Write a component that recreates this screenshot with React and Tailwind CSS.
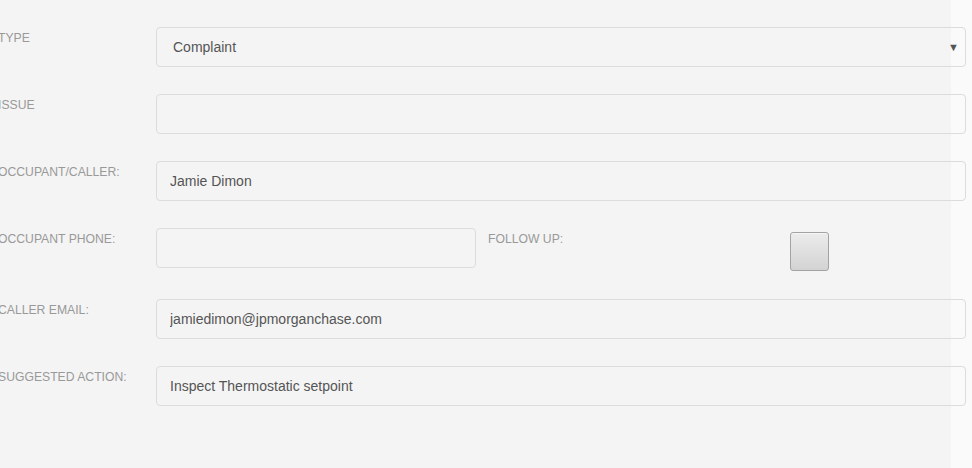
import React from 'react';

const labelCls = 'w-[158px] shrink-0 -ml-[2px] pt-[3px] text-[12.2px] leading-[17px] uppercase text-[#999]';
const inputCls =
  'h-[40px] rounded-[4px] border border-[#dcdcdc] bg-transparent pl-[13px] text-[14px] text-[#555] outline-none';

function Row({ label, children, className = 'h-[40px]' }) {
  return (
    <div className={`flex mb-[27px] ${className}`}>
      <div className={labelCls}>{label}</div>
      {children}
    </div>
  );
}

export default function App() {
  return (
    <div className="min-h-screen w-[972px] bg-[#fafafa] font-['Liberation_Sans',Arial,sans-serif] overflow-hidden">
      <div className="w-[951px] h-[468px] bg-[#f4f4f4] pt-[27px]">
        <Row label="Type">
          <div className={`${inputCls} w-[810px] shrink-0 flex items-center justify-between pl-[16px] pr-[6px]`}>
            <span>Complaint</span>
            <span className="text-[11px] text-[#555]">▼</span>
          </div>
        </Row>

        <Row label="Issue">
          <input className={`${inputCls} w-[810px] shrink-0`} defaultValue="" />
        </Row>

        <Row label="Occupant/Caller:">
          <input className={`${inputCls} w-[810px] shrink-0`} defaultValue="Jamie Dimon" />
        </Row>

        <Row label="Occupant Phone:" className="h-[44px]">
          <input className={`${inputCls} w-[320px] shrink-0`} defaultValue="" />
          <div className="w-[314px] shrink-0 pl-[12px] pt-[3px] text-[12.2px] leading-[17px] uppercase text-[#999]">
            Follow up:
          </div>
          <div className="mt-[4px] h-[39px] w-[39px] rounded-[3px] border border-[#a3a3a3] bg-gradient-to-b from-[#ececec] to-[#d3d3d3] shadow-[inset_0_1px_0_#f5f5f5]" />
        </Row>

        <Row label="Caller Email:">
          <input className={`${inputCls} w-[810px] shrink-0`} defaultValue="jamiedimon@jpmorganchase.com" />
        </Row>

        <Row label="Suggested Action:">
          <input className={`${inputCls} w-[810px] shrink-0`} defaultValue="Inspect Thermostatic setpoint" />
        </Row>
      </div>
    </div>
  );
}
